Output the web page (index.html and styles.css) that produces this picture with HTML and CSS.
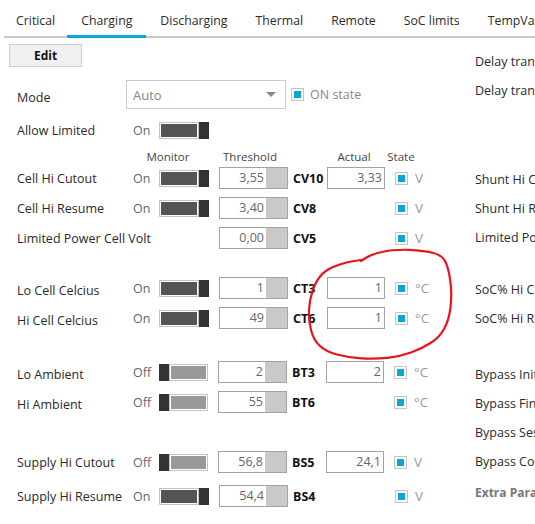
FILE: index.html
```html
<!DOCTYPE html>
<html>
<head>
<meta charset="utf-8">
<link rel="stylesheet" href="styles.css">
</head>
<body>
<div class="tabs">
  <div class="tab">Critical</div>
  <div class="tab active">Charging</div>
  <div class="tab">Discharging</div>
  <div class="tab">Thermal</div>
  <div class="tab">Remote</div>
  <div class="tab">SoC limits</div>
  <div class="tab">TempValues</div>
</div>
<div class="main">
  <div class="left">
    <button class="edit">Edit</button>
    <div class="mode-row">
      <span class="mode-lbl">Mode</span>
      <div class="select"><span>Auto</span><span class="caret"></span></div>
      <span class="chk"></span>
      <span class="on-state">ON state</span>
    </div>
    <div class="allow">
      <span class="lbl">Allow Limited</span>
      <span class="onoff">On</span>
      <span class="toggle on"><span class="track"></span><span class="thumb"></span></span>
    </div>
    <div class="head">
      <span class="h-mon">Monitor</span>
      <span class="h-thr">Threshold</span>
      <span class="h-act">Actual</span>
      <span class="h-state">State</span>
    </div>

    <div class="group">
      <div class="row">
        <span class="lbl">Cell Hi Cutout</span><span class="onoff">On</span>
        <span class="toggle on"><span class="track"></span><span class="thumb"></span></span>
        <span class="num"><span class="v">3,55</span><span class="spin"></span></span>
        <span class="code">CV10</span><span class="actual">3,33</span>
        <span class="chk"></span><span class="unit">V</span>
      </div>
      <div class="row">
        <span class="lbl">Cell Hi Resume</span><span class="onoff">On</span>
        <span class="toggle on"><span class="track"></span><span class="thumb"></span></span>
        <span class="num"><span class="v">3,40</span><span class="spin"></span></span>
        <span class="code">CV8</span><span class="actual none"></span>
        <span class="chk"></span><span class="unit">V</span>
      </div>
      <div class="row">
        <span class="lbl wide">Limited Power Cell Volt</span>
        <span class="num"><span class="v">0,00</span><span class="spin"></span></span>
        <span class="code">CV5</span><span class="actual none"></span>
        <span class="chk"></span><span class="unit">V</span>
      </div>
    </div>

    <div class="group g2">
      <div class="row">
        <span class="lbl">Lo Cell Celcius</span><span class="onoff">On</span>
        <span class="toggle on"><span class="track"></span><span class="thumb"></span></span>
        <span class="num"><span class="v">1</span><span class="spin"></span></span>
        <span class="code">CT3</span><span class="actual">1</span>
        <span class="chk"></span><span class="unit">°C</span>
      </div>
      <div class="row">
        <span class="lbl">Hi Cell Celcius</span><span class="onoff">On</span>
        <span class="toggle on"><span class="track"></span><span class="thumb"></span></span>
        <span class="num"><span class="v">49</span><span class="spin"></span></span>
        <span class="code">CT6</span><span class="actual">1</span>
        <span class="chk"></span><span class="unit">°C</span>
      </div>
    </div>

    <div class="group g3">
      <div class="row">
        <span class="lbl">Lo Ambient</span><span class="onoff">Off</span>
        <span class="toggle off"><span class="thumb"></span><span class="track"></span></span>
        <span class="num"><span class="v">2</span><span class="spin"></span></span>
        <span class="code">BT3</span><span class="actual">2</span>
        <span class="chk"></span><span class="unit">°C</span>
      </div>
      <div class="row">
        <span class="lbl">Hi Ambient</span><span class="onoff">Off</span>
        <span class="toggle off"><span class="thumb"></span><span class="track"></span></span>
        <span class="num"><span class="v">55</span><span class="spin"></span></span>
        <span class="code">BT6</span><span class="actual none"></span>
        <span class="chk"></span><span class="unit">°C</span>
      </div>
    </div>

    <div class="group g4">
      <div class="row">
        <span class="lbl">Supply Hi Cutout</span><span class="onoff">Off</span>
        <span class="toggle off"><span class="thumb"></span><span class="track"></span></span>
        <span class="num"><span class="v">56,8</span><span class="spin"></span></span>
        <span class="code">BS5</span><span class="actual">24,1</span>
        <span class="chk"></span><span class="unit">V</span>
      </div>
      <div class="row r-last">
        <span class="lbl">Supply Hi Resume</span><span class="onoff">On</span>
        <span class="toggle on"><span class="track"></span><span class="thumb"></span></span>
        <span class="num"><span class="v">54,4</span><span class="spin"></span></span>
        <span class="code">BS4</span><span class="actual none"></span>
        <span class="chk"></span><span class="unit">V</span>
      </div>
    </div>
  </div>

  <div class="right">
    <div class="item">Delay transition</div>
    <div class="item">Delay transition</div>
    <div class="item sec-shunt">Shunt Hi Cutout</div>
    <div class="item">Shunt Hi Resume</div>
    <div class="item">Limited Power</div>
    <div class="item sec-soc">SoC% Hi Cutout</div>
    <div class="item">SoC% Hi Resume</div>
    <div class="item sec-bypass">Bypass Initial</div>
    <div class="item">Bypass Final</div>
    <div class="item">Bypass Session</div>
    <div class="item">Bypass Continue</div>
    <div class="item extra">Extra Parameters</div>
  </div>
</div>

<svg class="annot" width="535" height="524" viewBox="0 0 535 524">
  <path d="M361,261 L366.5,257.5 Q372,254 382,252 Q392,249.5 408.5,249.8 Q425,250.5 433.5,253 Q443,255.5 446,263 Q449,270 450.5,282.5 Q452,295 450.5,307.5 Q449,320 444,329 Q439,338 430.5,343 Q422,348.5 411,352.5 Q400,356.5 387.5,357.8 Q375,359 361.5,358.3 Q348,357.5 337,354.5 Q325.5,351.5 319.5,345.5 Q313.5,340 311,330 Q308.5,320 309,310 Q309.5,300 312.5,291 Q315.5,282 320.5,276 Q325,270.5 332.5,267.3 Q340,264 346.5,262.5 Q353,261 357.5,260.5 L364,259.5" fill="none" stroke="#e8141c" stroke-width="2.2" stroke-linecap="round" stroke-linejoin="round"/>
</svg>
</body>
</html>
```
FILE: styles.css
```css
html, body {
  margin: 0;
  padding: 0;
}
body {
  font-family: "Open Sans", "Noto Sans", sans-serif;
  font-size: 12.5px;
  color: #2a2a2a;
  background: #fff;
  width: 535px;
  height: 524px;
  overflow: hidden;
  position: relative;
}

/* tabs */
.tabs {
  display: flex;
  margin-left: 4px;
  height: 36px;
  border-bottom: 2px solid #c9c9c9;
  white-space: nowrap;
}
.tab {
  position: relative;
  padding: 6px 14px 0;
  line-height: 30px;
  font-size: 12.3px;
  color: #2b2b2b;
  flex: none;
}
.tab:first-child {
  padding-left: 12px;
  padding-right: 12px;
}
.tab.active::after {
  content: "";
  position: absolute;
  left: 0;
  right: 0;
  bottom: -2px;
  height: 3px;
  background: #0aa6d8;
}

/* layout */
.main {
  display: flex;
}
.left {
  width: 466px;
  flex: none;
}
.right {
  margin-left: 9px;
  flex: 1;
  min-width: 0;
  overflow: hidden;
  white-space: nowrap;
  display: flex;
  flex-direction: column;
  gap: 9px;
  padding-top: 14px;
}

/* edit */
.edit {
  display: block;
  margin: 6px 0 0 9px;
  width: 73px;
  height: 23px;
  box-sizing: border-box;
  border: 1px solid #cfcfcf;
  background: #f0f0f0;
  font-family: inherit;
  font-weight: bold;
  font-size: 12px;
  color: #111;
  padding: 0;
  line-height: 21px;
  text-align: center;
}

/* mode */
.mode-row {
  display: flex;
  align-items: center;
  margin-top: 13px;
  height: 29px;
  padding-left: 17px;
}
.mode-lbl {
  width: 109px;
  flex: none;
  padding-top: 5px;
}
.select {
  width: 160px;
  height: 29px;
  box-sizing: border-box;
  border: 1px solid #cccccc;
  display: flex;
  align-items: center;
  justify-content: space-between;
  padding: 0 9px 0 6px;
  color: #888;
  font-size: 13px;
  flex: none;
}
.caret {
  width: 0;
  height: 0;
  border-left: 5.5px solid transparent;
  border-right: 5.5px solid transparent;
  border-top: 5px solid #8a8a8a;
}
.chk {
  width: 13px;
  height: 13px;
  box-sizing: border-box;
  border: 1px solid #c6c6c6;
  padding: 2px;
  flex: none;
  background: #fff;
}
.chk::before {
  content: "";
  display: block;
  width: 100%;
  height: 100%;
  background: #0aa6d8;
}
.mode-row .chk {
  margin-left: 5px;
}
.on-state {
  margin-left: 6px;
  color: #888;
}

/* allow */
.allow {
  display: flex;
  align-items: center;
  height: 20px;
  margin-top: 11px;
  padding-left: 17px;
}
.lbl {
  width: 116px;
  flex: none;
  white-space: nowrap;
}
.lbl.wide {
  width: 202px;
}
.onoff {
  width: 26px;
  flex: none;
  color: #666;
}

/* toggle */
.toggle {
  display: flex;
  width: 50px;
  height: 17px;
  flex: none;
}
.toggle .track {
  flex: 1;
  box-sizing: border-box;
  border: 1px solid #c4c4c4;
  padding: 1px;
  background: #fff;
}
.toggle .track::before {
  content: "";
  display: block;
  height: 100%;
  background: #555;
}
.toggle.off .track::before {
  background: #999;
}
.toggle .thumb {
  width: 10px;
  background: #333;
}
.toggle.off {
  width: 49px;
  margin-right: 1px;
}

/* header */
.head {
  display: flex;
  align-items: flex-end;
  height: 23px;
  padding-left: 133px;
  font-size: 11.5px;
  line-height: 12px;
  color: #444;
}
.head span {
  text-align: center;
  flex: none;
}
.h-mon { width: 70px; }
.h-thr { width: 94px; }
.h-act { width: 60px; margin-left: 27px; }
.h-state { width: 34px; }

/* rows */
.g2 { margin-top: 20px; }
.g3 { margin-top: 24px; }
.g4 { margin-top: 30px; }
.r-last { margin-top: 4px; }
.g2 .lbl, .g3 .lbl {
  padding-top: 4px;
}
.row {
  display: flex;
  align-items: center;
  height: 30px;
  padding-left: 17px;
  white-space: nowrap;
}
.row .toggle {
  margin-right: 10px;
}
.num {
  display: flex;
  width: 69px;
  height: 22px;
  box-sizing: border-box;
  border: 1px solid #a3a3a3;
  flex: none;
  color: #666;
}
.num .v {
  flex: 1;
  text-align: right;
  padding-right: 2px;
  line-height: 20px;
}
.num .spin {
  width: 21px;
  background: #c9c9c9;
}
.code {
  width: 34px;
  margin-left: 5px;
  font-weight: bold;
  color: #111;
  flex: none;
}
.actual {
  width: 58px;
  height: 22px;
  box-sizing: border-box;
  border: 1px solid #a3a3a3;
  text-align: right;
  padding-right: 2px;
  line-height: 20px;
  color: #666;
  flex: none;
}
.actual.none {
  border-color: transparent;
}
.row .chk {
  margin-left: 10px;
}
.unit {
  margin-left: 7px;
  color: #9a9a9a;
  font-size: 13.5px;
}

/* right column */
.item {
  height: 20px;
  line-height: 20px;
}
.sec-shunt { margin-top: 60px; }
.sec-soc { margin-top: 23px; }
.sec-bypass { margin-top: 27px; }
.extra {
  margin-top: 2px;
  font-weight: bold;
  color: #777;
  font-size: 12px;
}

/* annotation overlay */
.annot {
  position: absolute;
  left: 0;
  top: 0;
  pointer-events: none;
}
```
